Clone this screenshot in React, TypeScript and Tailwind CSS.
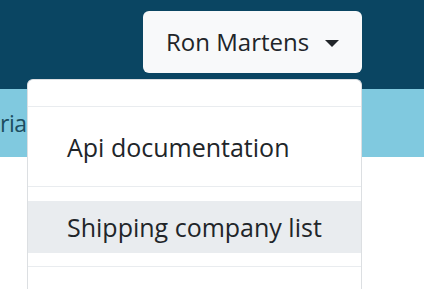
const font = { fontFamily: '"Open Sans", "Noto Sans", sans-serif' }

const MenuDivider = () => <div className="h-px bg-[#e9ecef]" />

export default function App() {
  return (
    <div className="relative h-[289px] w-[424px] overflow-hidden bg-white" style={font}>
      {/* Top navbar */}
      <header className="flex h-[89px] justify-end bg-[#0a4562] pr-[62px] pt-[11px]">
        <button className="flex h-[62px] w-[219px] items-center rounded-[6px] bg-[#f8f9fa] pl-[23px] text-[24px] leading-[36px] text-[#212529]">
          <span>Ron Martens</span>
          <span className="ml-[16px] mt-[2px] h-0 w-0 border-x-[7px] border-t-[7px] border-x-transparent border-t-[#212529]" />
        </button>
      </header>

      {/* Sub bar */}
      <div className="flex h-[68px] items-center bg-[#80c9df]">
        <span className="text-[23px] tracking-[-0.5px] text-[#1c4d60]">ria</span>
      </div>

      {/* Dropdown menu */}
      <div className="absolute left-[27px] top-[79px] w-[335px] rounded-t-[6px] border border-b-0 border-[#dcdfe2] bg-white pt-[26px]">
        <MenuDivider />
        <div className="mb-[13px] mt-[14px] px-[39px] py-[8px] text-[25px] leading-[36px] text-[#212529]">
          Api documentation
        </div>
        <MenuDivider />
        <div className="mb-[13px] mt-[14px] bg-[#e9ecef] px-[39px] py-[8px] text-[25px] leading-[36px] text-[#212529]">
          Shipping company list
        </div>
        <MenuDivider />
        <div className="h-[40px]" />
      </div>
    </div>
  )
}
